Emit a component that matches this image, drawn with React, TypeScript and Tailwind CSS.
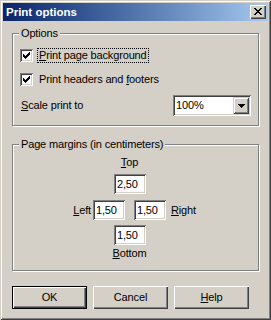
import React from "react";

function Pixels({ rows, color = "#000" }: { rows: string[]; color?: string }) {
  const w = rows[0].length;
  const h = rows.length;
  const rects: React.ReactElement[] = [];
  rows.forEach((r, y) => {
    [...r].forEach((c, x) => {
      if (c === "X") rects.push(<rect key={`${x}-${y}`} x={x} y={y} width={1} height={1} fill={color} />);
    });
  });
  return (
    <svg width={w} height={h} viewBox={`0 0 ${w} ${h}`} shapeRendering="crispEdges" className="block">
      {rects}
    </svg>
  );
}

const CHECK = ["......X", ".....XX", "X...XXX", "XX.XXX.", "XXXXX..", ".XXX...", "..X...."];
const CLOSE = ["XX....XX", ".XX..XX.", "..XXXX..", "...XX...", "..XXXX..", ".XX..XX.", "XX....XX"];
const DOWN = ["XXXXXXX", ".XXXXX.", "..XXX..", "...X..."];

const sunken =
  "shadow-[inset_1px_1px_0_#808080,inset_-1px_-1px_0_#ffffff,inset_2px_2px_0_#404040,inset_-2px_-2px_0_#d4d0c8]";

function Checkbox() {
  return (
    <div className={`w-[13px] h-[13px] bg-white flex items-center justify-center shrink-0 ${sunken}`}>
      <Pixels rows={CHECK} />
    </div>
  );
}

function Field({ value }: { value: string }) {
  return (
    <div className={`w-[32px] h-[20px] bg-white flex items-center pl-[3px] ${sunken}`}>
      <span>{value}</span>
    </div>
  );
}

function Group({ label, h, children }: { label: string; h: string; children: React.ReactNode }) {
  return (
    <div
      className={`relative w-[247px] ${h} border border-[#808080] shadow-[inset_1px_1px_0_#ffffff,1px_1px_0_#ffffff] flex flex-col`}
    >
      <span className="absolute left-[6px] -top-[7px] px-[2px] bg-[#d4d0c8]">{label}</span>
      {children}
    </div>
  );
}

function Button({ children, def }: { children: React.ReactNode; def?: boolean }) {
  if (def) {
    return (
      <div className="w-[75px] h-[23px] border border-black">
        <div className="w-full h-full bg-[#d4d0c8] flex items-center justify-center shadow-[inset_1px_1px_0_#ffffff,inset_-1px_-1px_0_#404040,inset_-2px_-2px_0_#808080]">
          {children}
        </div>
      </div>
    );
  }
  return (
    <div className="w-[75px] h-[23px] bg-[#d4d0c8] flex items-center justify-center shadow-[inset_1px_1px_0_#ffffff,inset_-1px_-1px_0_#404040,inset_-2px_-2px_0_#808080]">
      {children}
    </div>
  );
}

export default function App() {
  return (
    <div className="w-[271px] h-[320px] bg-[#d4d0c8] p-[3px] flex flex-col font-['Liberation_Sans',Arial,sans-serif] text-[11px] leading-[13px] tracking-[-0.15px] text-black shadow-[inset_1px_1px_0_#d4d0c8,inset_-1px_-1px_0_#404040,inset_2px_2px_0_#ffffff,inset_-2px_-2px_0_#808080]">
      <div className="h-[18px] flex items-center justify-between bg-linear-to-r from-[#0a246a] to-[#a6caf0] pl-[3px] pr-[2px]">
        <span className="text-white font-bold text-[11.5px] leading-[18px] tracking-normal">Print options</span>
        <div className="w-[16px] h-[14px] bg-[#d4d0c8] flex justify-center pt-[3px] shadow-[inset_1px_1px_0_#ffffff,inset_-1px_-1px_0_#404040,inset_-2px_-2px_0_#808080]">
          <Pixels rows={CLOSE} />
        </div>
      </div>

      <div className="flex flex-col px-[9px]">
        <div className="mt-[12px]">
          <Group label="Options" h="h-[93px]">
            <div className="flex flex-col pl-[7px] pr-[7px]">
              <div className="mt-[14px] h-[15px] flex items-center">
                <Checkbox />
                <span className="ml-[4px] h-[15px] border border-dotted border-black px-[1px]">
                  <u className="underline-offset-1">P</u>rint page background
                </span>
              </div>
              <div className="mt-[9px] h-[15px] flex items-center">
                <Checkbox />
                <span className="ml-[4px] h-[15px] border border-transparent px-[1px]">
                  Print headers and <u className="underline-offset-1">f</u>ooters
                </span>
              </div>
              <div className="mt-[8px] h-[21px] flex items-center justify-between">
                <span className="ml-[1px]">
                  <u className="underline-offset-1">S</u>cale print to
                </span>
                <div className={`w-[78px] h-[21px] bg-white flex items-stretch p-[2px] ${sunken}`}>
                  <div className="flex-1 flex items-center pl-[1px]">100%</div>
                  <div className="w-[16px] bg-[#d4d0c8] flex items-center justify-center shadow-[inset_1px_1px_0_#d4d0c8,inset_-1px_-1px_0_#404040,inset_2px_2px_0_#ffffff,inset_-2px_-2px_0_#808080]">
                    <Pixels rows={DOWN} />
                  </div>
                </div>
              </div>
            </div>
          </Group>
        </div>

        <div className="mt-[18px]">
          <Group label="Page margins (in centimeters)" h="h-[127px]">
            <div className="ml-[80px] w-[73px] text-center mt-[11px]">
              <u className="underline-offset-1">T</u>op
            </div>
            <div className="ml-[101px] mt-[5px]">
              <Field value="2,50" />
            </div>
            <div className="mt-[6px] flex items-center">
              <div className="w-[80px] flex justify-end pr-[2px]">
                <span>
                  <u className="underline-offset-1">L</u>eft
                </span>
              </div>
              <Field value="1,50" />
              <div className="ml-[9px]">
                <Field value="1,50" />
              </div>
              <span className="pl-[5px]">
                <u className="underline-offset-1">R</u>ight
              </span>
            </div>
            <div className="ml-[101px] mt-[5px]">
              <Field value="1,50" />
            </div>
            <div className="ml-[80px] w-[73px] text-center mt-[2px]">
              <u className="underline-offset-1">B</u>ottom
            </div>
          </Group>
        </div>

        <div className="mt-[15px] flex gap-[6px]">
          <Button def>OK</Button>
          <Button>Cancel</Button>
          <Button>
            <span>
              <u className="underline-offset-1">H</u>elp
            </span>
          </Button>
        </div>
      </div>
    </div>
  );
}
